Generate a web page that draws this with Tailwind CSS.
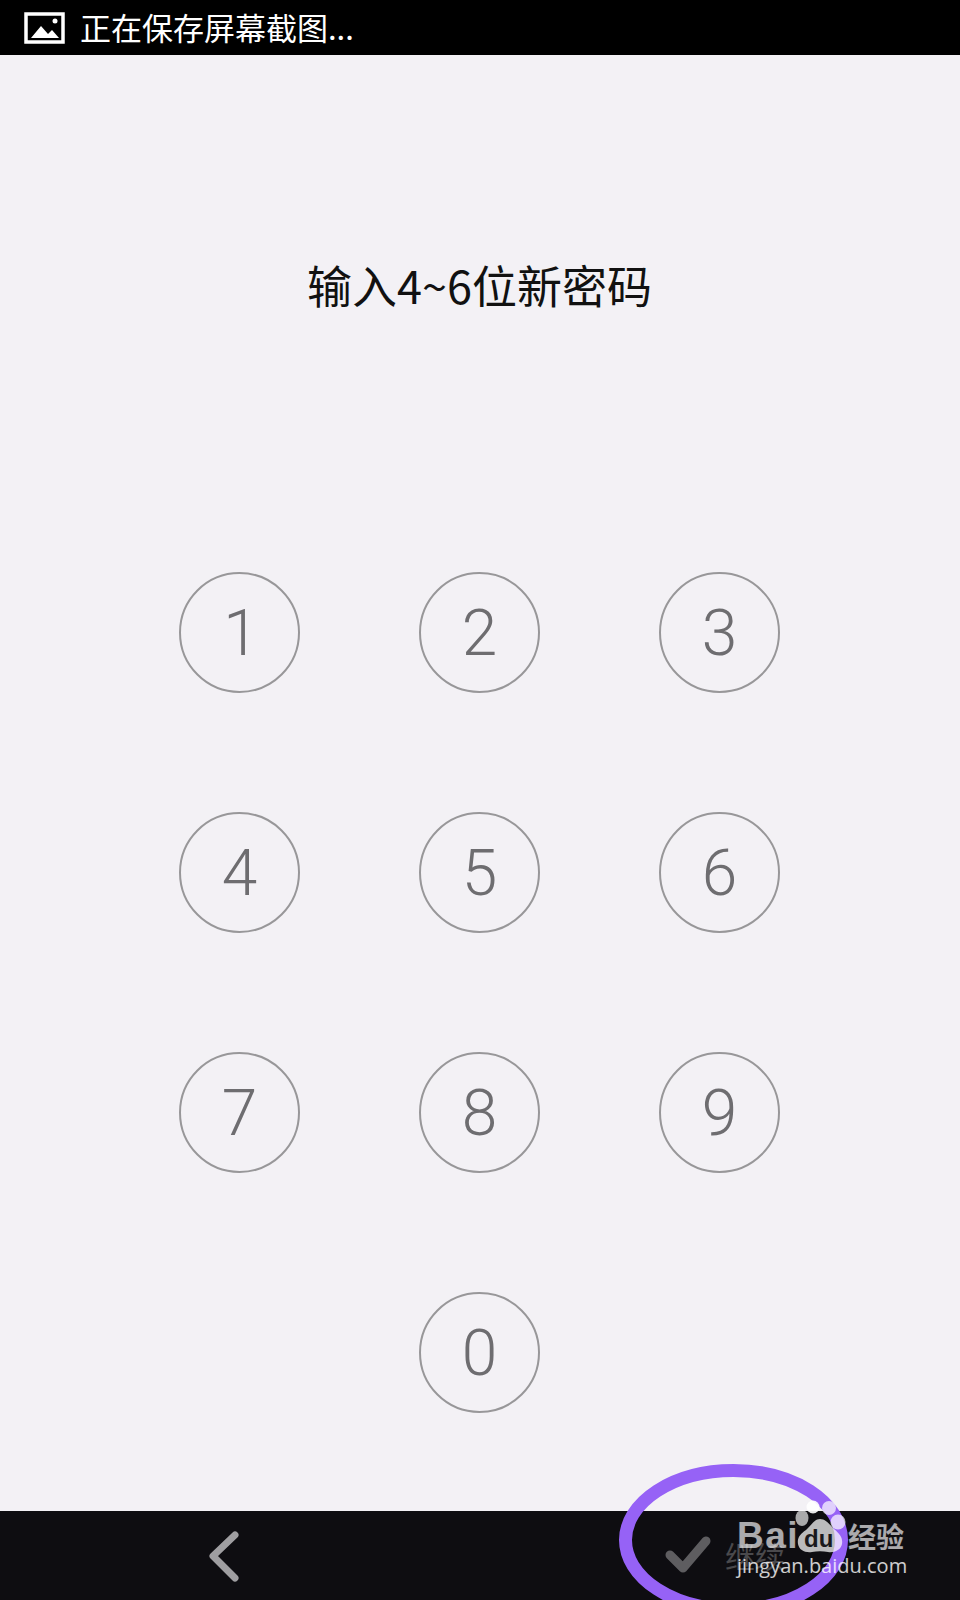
<!doctype html>
<html lang="zh">
<head>
<meta charset="utf-8">
<script src="https://cdn.jsdelivr.net/npm/@tailwindcss/browser@4"></script>
</head>
<body class="m-0">
<div class="relative w-[960px] h-[1600px] overflow-hidden flex flex-col bg-[#f3f1f5] font-['Roboto','Noto_Sans_CJK_SC',sans-serif]">
  <header class="h-[55px] bg-black flex items-center pl-6 gap-[15px] shrink-0">
    <svg class="w-[41px] h-[32px]" viewBox="0 0 41 32">
      <rect x="2" y="2" width="37" height="28" fill="none" stroke="#fff" stroke-width="3.5"/>
      <circle cx="31" cy="9" r="2.5" fill="#fff"/>
      <path d="M7 26 L17 14 L24 22 L28 18 L35 26 Z" fill="#fff"/>
    </svg>
    <span class="text-white text-[31px] leading-none pb-[2px] font-['Noto_Sans_CJK_SC','Roboto',sans-serif]">正在保存屏幕截图...</span>
  </header>

  <main class="flex-1 flex flex-col items-center pr-[1px]">
    <h1 class="mt-[203px] text-[45px] leading-[54px] font-normal text-[#111] font-['Noto_Sans_CJK_SC','Roboto',sans-serif]">输入4~6位新密码</h1>
    <div class="mt-[260px] grid grid-cols-3 gap-x-[119px] gap-y-[119px] w-[601px] text-[64px] font-light text-[#6e6d70]">
      <div class="w-[121px] h-[121px] rounded-full border-[2.5px] border-[#989799] flex items-center justify-center pt-[3px] pl-[3px]">1</div>
      <div class="w-[121px] h-[121px] rounded-full border-[2.5px] border-[#989799] flex items-center justify-center pt-[3px]">2</div>
      <div class="w-[121px] h-[121px] rounded-full border-[2.5px] border-[#989799] flex items-center justify-center pt-[3px]">3</div>
      <div class="w-[121px] h-[121px] rounded-full border-[2.5px] border-[#989799] flex items-center justify-center pt-[3px]">4</div>
      <div class="w-[121px] h-[121px] rounded-full border-[2.5px] border-[#989799] flex items-center justify-center pt-[3px]">5</div>
      <div class="w-[121px] h-[121px] rounded-full border-[2.5px] border-[#989799] flex items-center justify-center pt-[3px]">6</div>
      <div class="w-[121px] h-[121px] rounded-full border-[2.5px] border-[#989799] flex items-center justify-center pt-[3px]">7</div>
      <div class="w-[121px] h-[121px] rounded-full border-[2.5px] border-[#989799] flex items-center justify-center pt-[3px]">8</div>
      <div class="w-[121px] h-[121px] rounded-full border-[2.5px] border-[#989799] flex items-center justify-center pt-[3px]">9</div>
      <div class="col-start-2 w-[121px] h-[121px] rounded-full border-[2.5px] border-[#989799] flex items-center justify-center pt-[3px]">0</div>
    </div>
  </main>

  <footer class="h-[89px] bg-[#0e0d11] shrink-0 grid grid-cols-2">
    <div class="flex items-center justify-center pr-[32px]">
      <svg class="w-[40px] h-[60px]" viewBox="0 0 40 60">
        <path d="M31 9 L9 30 L31 52" fill="none" stroke="#9f9ea1" stroke-width="7" stroke-linecap="round" stroke-linejoin="round"/>
      </svg>
    </div>
    <div class="flex items-center justify-center gap-[14px] pl-[10px] pb-[1px]">
      <svg class="w-[46px] h-[40px]" viewBox="0 0 46 40">
        <path d="M5 20 L18 33 L41 6" fill="none" stroke="#5e5d60" stroke-width="9" stroke-linecap="round" stroke-linejoin="round"/>
      </svg>
      <span class="text-[30px] leading-none text-[#4a494c] font-['Noto_Sans_CJK_SC',sans-serif]">继续</span>
    </div>
  </footer>

  <svg class="absolute left-[600px] top-[1450px] w-[270px] h-[150px]" viewBox="0 0 270 150">
    <ellipse cx="133.500" cy="90" rx="108" ry="69.500" fill="none" stroke="#9662f6" stroke-width="13"/>
    <g fill="#fff">
      <ellipse cx="202" cy="68" rx="6.500" ry="8" fill-opacity=".65"/>
      <circle cx="213" cy="57" r="6.500" fill-opacity=".9"/>
      <circle cx="229" cy="58" r="7" fill-opacity=".7"/>
      <circle cx="238" cy="72" r="7.500" fill-opacity=".7"/>
      <path fill-opacity=".72" d="M220 69 C226 69 230 75 234 79 C240 84 243 88 242 94 C241 100 234 103 228 102 C223 101 217 101 212 102 C205 103 199 100 198 94 C197 88 200 84 206 80 C211 76 214 69 220 69 Z"/>
    </g>
  </svg>
  <div class="absolute left-[737px] top-[1515px] text-[37px] leading-[42px] tracking-[1.5px] font-bold text-white/65 font-['Liberation_Sans',sans-serif]">Bai</div>
  <div class="absolute left-[804px] top-[1527px] text-[24px] leading-[24px] font-bold text-[#1a191c] font-['Liberation_Sans',sans-serif]">du</div>
  <div class="absolute left-[848px] top-[1519px] text-[28px] leading-[34px] font-bold text-white/65 font-['Noto_Sans_CJK_SC',sans-serif]">经验</div>
  <div class="absolute left-[737px] top-[1553px] text-[20px] leading-[26px] text-white/80 font-['Open_Sans',sans-serif]">jingyan.baidu.com</div>
</div>
</body>
</html>
